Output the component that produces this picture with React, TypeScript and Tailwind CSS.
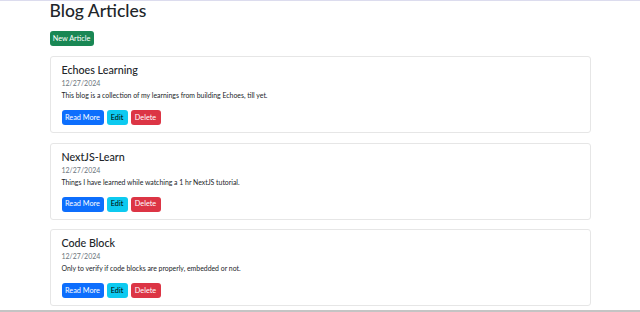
const articles = [
  {
    id: 1,
    title: "Echoes Learning",
    date: "12/27/2024",
    summary: "This blog is a collection of my learnings from building Echoes, till yet.",
  },
  {
    id: 2,
    title: "NextJS-Learn",
    date: "12/27/2024",
    summary: "Things I have learned while watching a 1 hr NextJS tutorial.",
  },
  {
    id: 3,
    title: "Code Block",
    date: "12/27/2024",
    summary: "Only to verify if code blocks are properly, embedded or not.",
  },
];

const font = { fontFamily: '"Lato", "Noto Sans", sans-serif' };

export default function App() {
  return (
    <div
      style={font}
      className="h-[312px] overflow-hidden bg-white text-[#212529] border-t border-t-[#dcdcee] border-b-2 border-b-[#c4c4c4]"
    >
      <div className="w-[541px] mx-auto">
        <h1 className="text-[17.5px] leading-[20px] font-medium">Blog Articles</h1>

        {/* Header action */}
        <button className="mt-[10px] h-[15px] w-[44px] flex items-center justify-center rounded-[3px] bg-[#198754] text-white text-[7.3px] leading-none">
          New Article
        </button>

        {/* Article cards */}
        <div className="mt-[10px] flex flex-col gap-[9.5px]">
          {articles.map((a) => (
            <div
              key={a.id}
              className="h-[77px] rounded-[3px] border border-[#e6e6e6] px-[11px] pt-[6px]"
            >
              <h3 className="text-[10.7px] leading-[14px] font-medium">{a.title}</h3>
              <p className="text-[7px] leading-[9px] text-[#6c757d] mt-[2px]">{a.date}</p>
              <p className="text-[6.9px] leading-[9px] mt-[3px]">{a.summary}</p>
              <div className="mt-[10px] flex gap-[3px]">
                <button className="h-[15px] w-[42px] flex items-center justify-center rounded-[3px] bg-[#0d6efd] text-white text-[7.3px] leading-none">
                  Read More
                </button>
                <button className="h-[15px] w-[21px] flex items-center justify-center rounded-[3px] bg-[#0dcaf0] text-black text-[7.3px] leading-none">
                  Edit
                </button>
                <button className="h-[15px] w-[30px] flex items-center justify-center rounded-[3px] bg-[#dc3545] text-white text-[7.3px] leading-none">
                  Delete
                </button>
              </div>
            </div>
          ))}
        </div>
      </div>
    </div>
  );
}
